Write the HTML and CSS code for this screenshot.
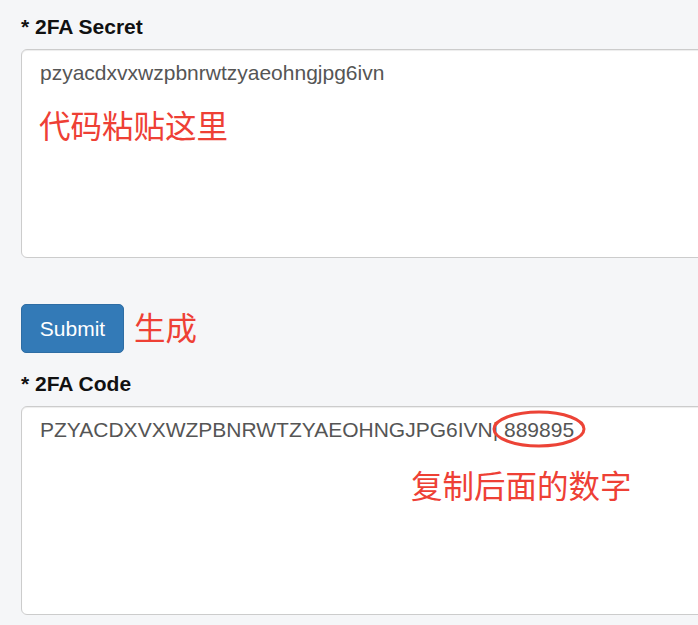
FILE: index.html
```html
<!DOCTYPE html>
<html lang="en">

<head>
    <meta charset="UTF-8">
    <meta name="viewport" content="width=device-width, initial-scale=1.0">
    <title>2FA</title>
    <link rel="stylesheet" href="styles.css">
</head>

<body>
    <section class="panel">
        <div class="form-group">
            <label class="field-label">* 2FA Secret</label>
            <div class="field-wrap">
                <textarea class="field" readonly>pzyacdxvxwzpbnrwtzyaeohngjpg6ivn</textarea>
                <span class="note note-paste">代码粘贴这里</span>
            </div>
        </div>

        <div class="actions">
            <button class="btn-submit">Submit</button>
            <span class="note-inline">生成</span>
        </div>

        <div class="form-group">
            <label class="field-label">* 2FA Code</label>
            <div class="field-wrap">
                <textarea class="field" readonly>PZYACDXVXWZPBNRWTZYAEOHNGJPG6IVN| 889895</textarea>
                <svg class="ring" width="96" height="42" viewBox="0 0 96 42">
                    <ellipse cx="48" cy="21" rx="45" ry="17" fill="none" stroke="#ec4336" stroke-width="3" />
                </svg>
                <span class="note note-copy">复制后面的数字</span>
            </div>
        </div>
    </section>
</body>

</html>
```

FILE: styles.css
```css
html,
body {
    margin: 0;
    overflow: hidden;
}

body {
    background-color: #f5f6f8;
    font-family: "Liberation Sans", Arial, "Noto Sans CJK SC", sans-serif;
    color: #333;
}

.panel {
    padding: 13px 0 0 21px;
    width: 780px;
}

.form-group {
    display: flex;
    flex-direction: column;
}

.field-label {
    font-weight: bold;
    font-size: 21px;
    line-height: 27px;
    color: #111;
    margin-bottom: 9px;
}

.field-wrap {
    position: relative;
}

.field {
    display: block;
    box-sizing: border-box;
    width: 760px;
    height: 209px;
    margin: 0;
    padding: 8px 18px;
    border: 1px solid #ccc;
    border-radius: 6px;
    background: #fff;
    font-family: "Liberation Sans", Arial, sans-serif;
    font-size: 21px;
    line-height: 30px;
    color: #555;
    resize: none;
    outline: none;
    box-shadow: inset 0 1px 1px rgba(0, 0, 0, 0.075);
}

.actions {
    display: flex;
    align-items: center;
    gap: 10px;
    margin: 46px 0 17px;
}

.btn-submit {
    width: 103px;
    height: 49px;
    padding: 0;
    border: 1px solid #2e6da4;
    border-radius: 5px;
    background-color: #337ab7;
    color: #fff;
    font-family: "Liberation Sans", Arial, sans-serif;
    font-size: 21px;
}

.note,
.note-inline {
    font-family: "Noto Sans CJK SC", sans-serif;
    font-size: 31.5px;
    line-height: 40px;
    color: #ee4035;
}

.note-inline {
    margin-top: -6px;
}

.note {
    position: absolute;
}

.note-paste {
    left: 18px;
    top: 55px;
}

.note-copy {
    left: 390px;
    top: 58px;
}

.ring {
    position: absolute;
    left: 470px;
    top: 2px;
}
```
